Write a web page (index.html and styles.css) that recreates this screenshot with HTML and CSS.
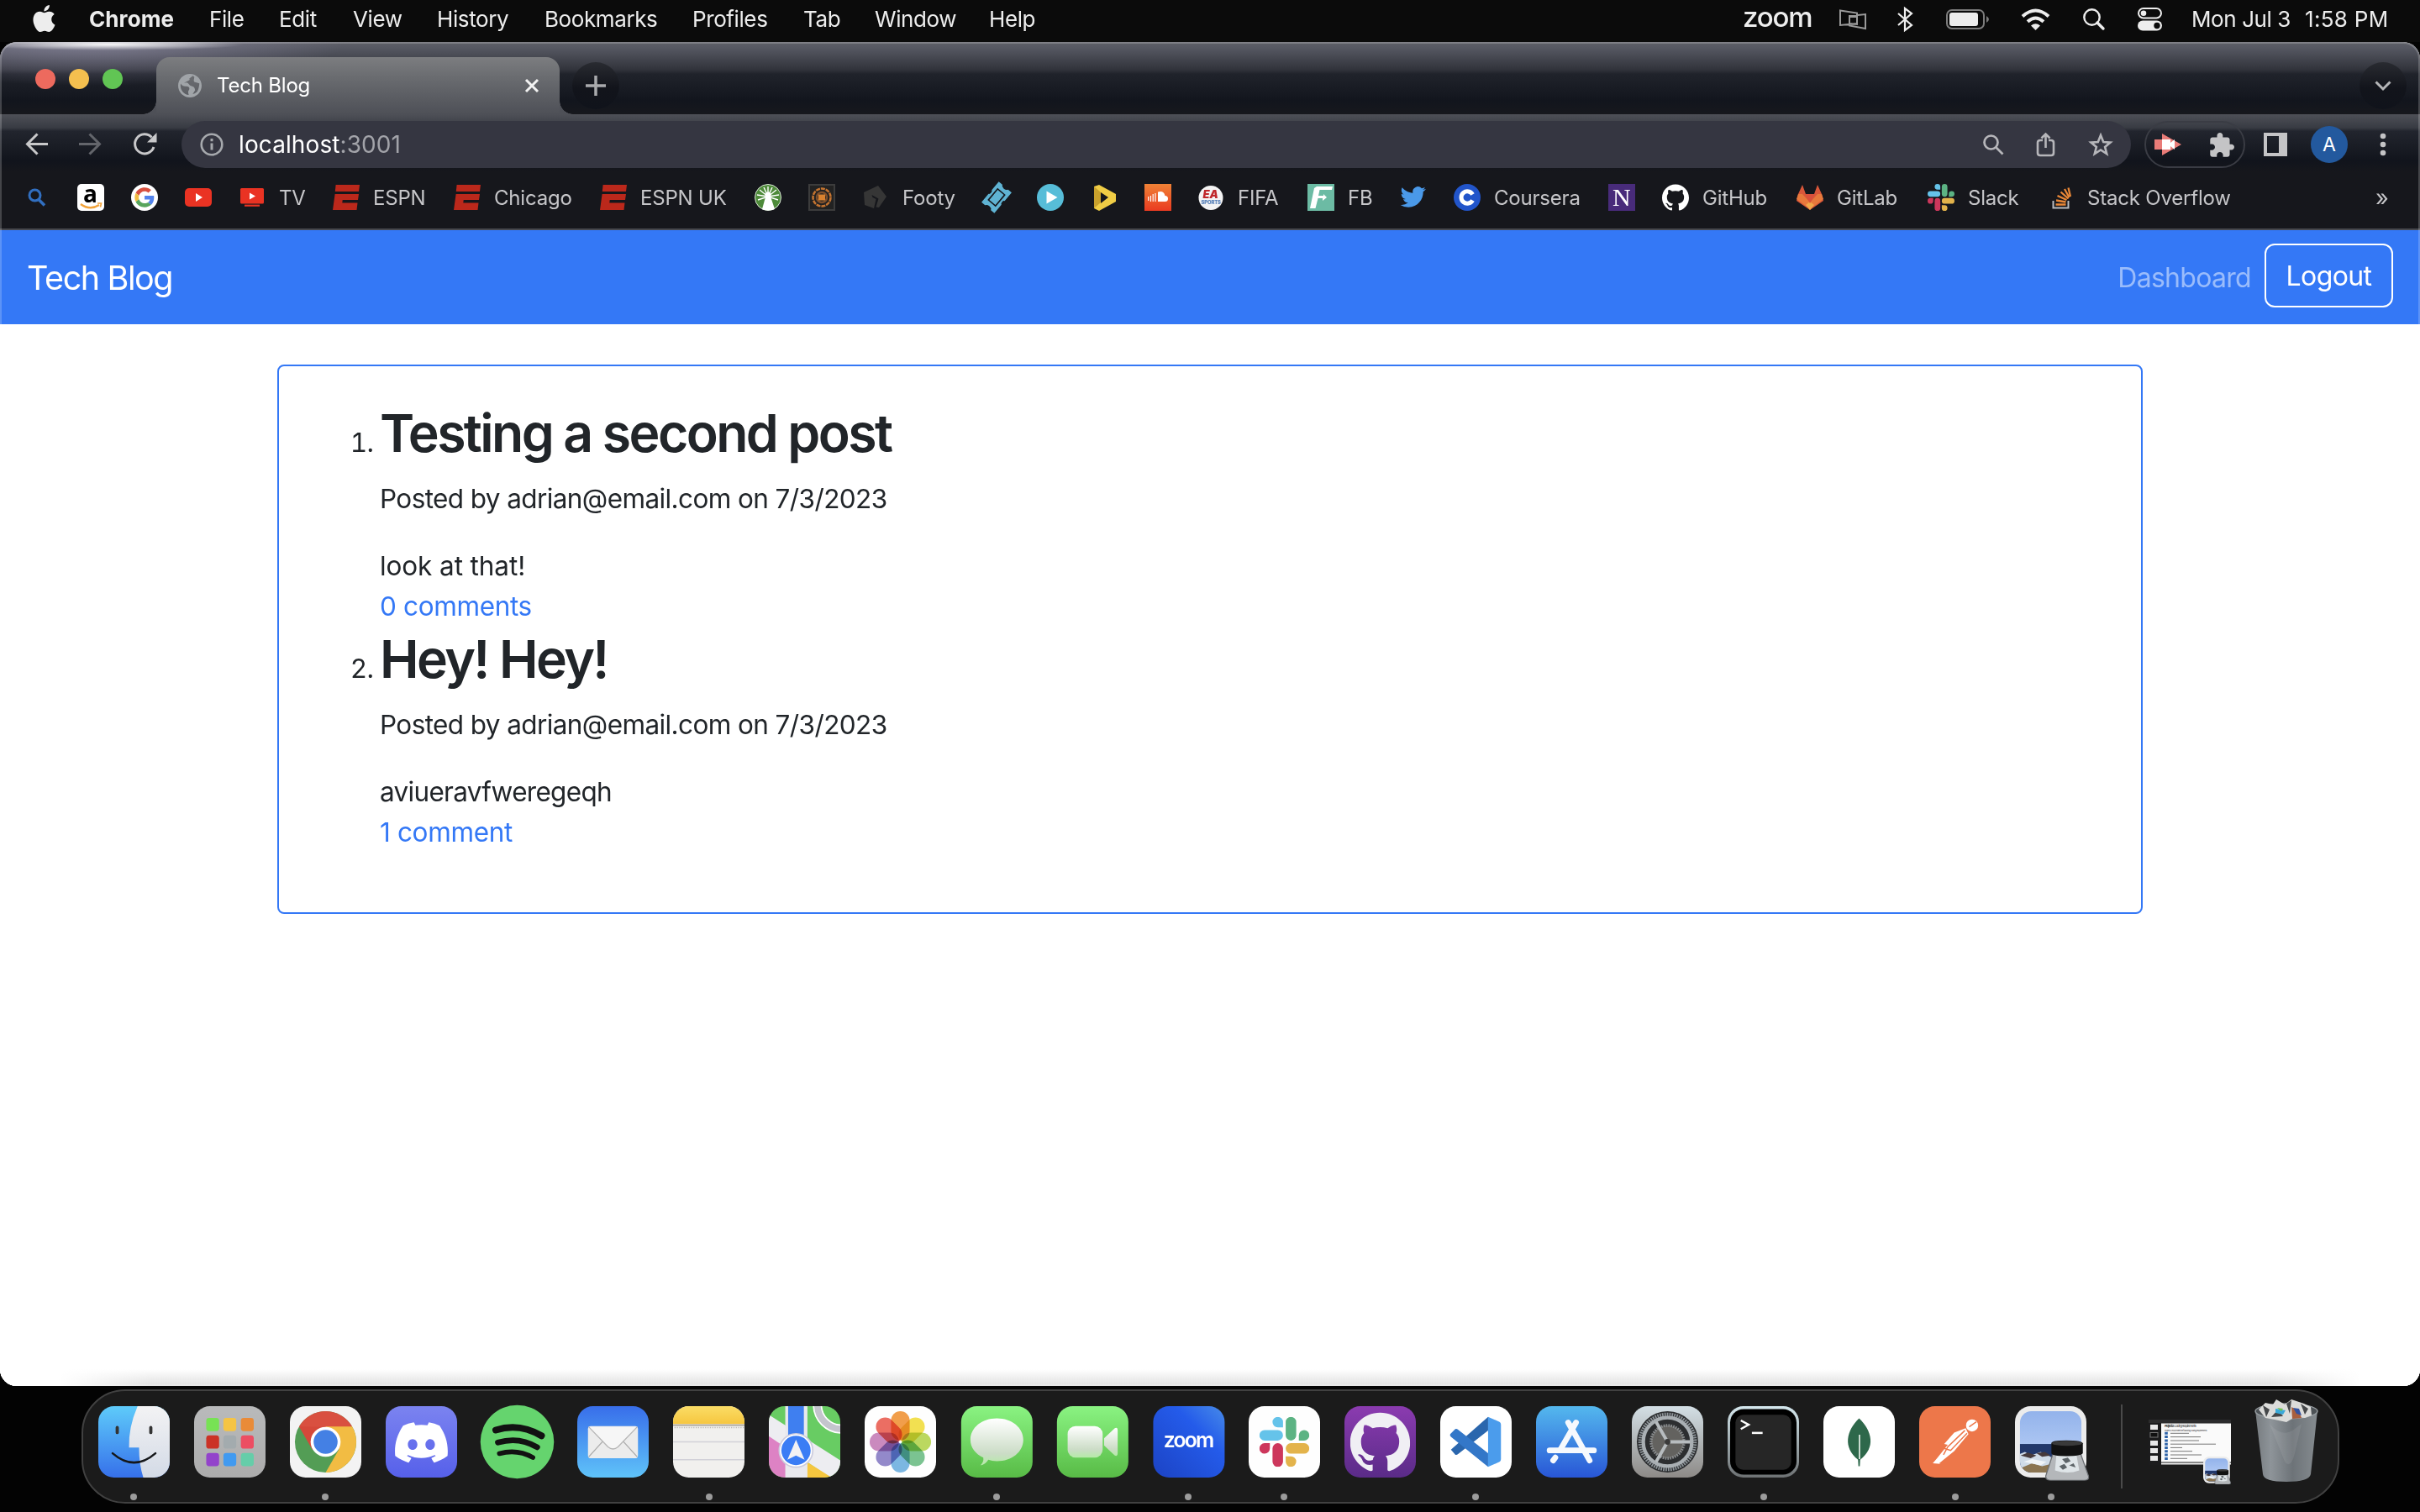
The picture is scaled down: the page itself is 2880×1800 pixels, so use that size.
FILE: index.html
```html
<!DOCTYPE html>
<html lang="en">
<head>
<meta charset="utf-8">
<title>Tech Blog</title>
<link rel="stylesheet" href="styles.css">
</head>
<body>
<svg class="defs" aria-hidden="true">
  <defs>
    <symbol id="espn" viewBox="0 0 32 32"><path d="M3.600 1H32L31 9H2.800zM2.600 12H31L30 19H11.700L11.300 22.500H29.500L28.500 31H0z" fill="#bb281b"/></symbol>
    <symbol id="slack" viewBox="0 0 24 24">
      <path fill="#cd375c" d="M5.042 15.165a2.528 2.528 0 0 1-2.520 2.523A2.528 2.528 0 0 1 0 15.165a2.527 2.527 0 0 1 2.522-2.520h2.520v2.520zM6.313 15.165a2.527 2.527 0 0 1 2.521-2.520 2.527 2.527 0 0 1 2.521 2.520v6.313A2.528 2.528 0 0 1 8.834 24a2.528 2.528 0 0 1-2.521-2.522v-6.313z"/>
      <path fill="#65c3ea" d="M8.834 5.042a2.528 2.528 0 0 1-2.521-2.520A2.528 2.528 0 0 1 8.834 0a2.528 2.528 0 0 1 2.521 2.522v2.520H8.834zM8.834 6.313a2.528 2.528 0 0 1 2.521 2.521 2.528 2.528 0 0 1-2.521 2.521H2.522A2.528 2.528 0 0 1 0 8.834a2.528 2.528 0 0 1 2.522-2.521h6.312z"/>
      <path fill="#5cb383" d="M18.956 8.834a2.528 2.528 0 0 1 2.522-2.521A2.528 2.528 0 0 1 24 8.834a2.528 2.528 0 0 1-2.522 2.521h-2.522V8.834zM17.688 8.834a2.528 2.528 0 0 1-2.523 2.521 2.527 2.527 0 0 1-2.520-2.521V2.522A2.527 2.527 0 0 1 15.165 0a2.528 2.528 0 0 1 2.523 2.522v6.312z"/>
      <path fill="#e3b34b" d="M15.165 18.956a2.528 2.528 0 0 1 2.523 2.522A2.528 2.528 0 0 1 15.165 24a2.527 2.527 0 0 1-2.520-2.522v-2.522h2.520zM15.165 17.688a2.527 2.527 0 0 1-2.520-2.523 2.526 2.526 0 0 1 2.520-2.520h6.313A2.527 2.527 0 0 1 24 15.165a2.528 2.528 0 0 1-2.522 2.523h-6.313z"/>
    </symbol>
    <symbol id="github" viewBox="0 0 24 24"><path d="M12 .297c-6.630 0-12 5.373-12 12 0 5.303 3.438 9.800 8.205 11.385.6.113.82-.258.82-.577 0-.285-.01-1.040-.015-2.040-3.338.724-4.042-1.610-4.042-1.610C4.422 18.070 3.633 17.700 3.633 17.700c-1.087-.744.084-.729.084-.729 1.205.084 1.838 1.236 1.838 1.236 1.070 1.835 2.809 1.305 3.495.998.108-.776.417-1.305.76-1.605-2.665-.3-5.466-1.332-5.466-5.930 0-1.310.465-2.380 1.235-3.220-.135-.303-.54-1.523.105-3.176 0 0 1.005-.322 3.300 1.230.96-.267 1.980-.399 3-.405 1.020.006 2.040.138 3 .405 2.280-1.552 3.285-1.230 3.285-1.230.645 1.653.24 2.873.12 3.176.765.84 1.230 1.910 1.230 3.220 0 4.610-2.805 5.625-5.475 5.920.42.36.81 1.096.81 2.220 0 1.606-.015 2.896-.015 3.286 0 .315.21.69.825.57C20.565 22.092 24 17.592 24 12.297c0-6.627-5.373-12-12-12"/></symbol>
    <symbol id="preview" viewBox="0 0 104 104">
      <rect width="100" height="100" rx="22" fill="#ececec"/>
      <clipPath id="pvc"><rect x="7" y="7" width="86" height="86" rx="16"/></clipPath>
      <g clip-path="url(#pvc)">
        <rect width="100" height="100" fill="url(#sky)"/>
        <rect y="53" width="100" height="50" fill="#22386b"/>
        <path d="M0 70l14-6 8 5 14-5 14 7 8 20H0z" fill="#cfdbe8"/>
        <path d="M8 69l10-4 12 4-8 4zM30 66l12-2 8 5-12 2z" fill="#463a3c"/>
        <path d="M10 86l14-6 14 4 16-4v20H10z" fill="#8b7552"/>
        <path d="M12 78l12-4 20 4-8 5z" fill="#f0f4f8"/>
      </g>
      <path d="M53 67h39l11 31q1 6-6 6H50q-7 0-7-6z" fill="#b4b7ba" stroke="#6b6f73" stroke-width="1.500"/>
      <path d="M58 68h28l4 22q-16 6-34 0z" fill="#dfe5e8"/>
      <path d="M66 74l8-2 4 5-7 3zM62 84l7-3 4 5-6 3zM76 83l6-3 3 6z" fill="#5d6468"/>
      <path d="M51 52q0-4 21-4t23 4v14q-2 4-23 4t-21-4z" fill="#111"/>
      <ellipse cx="73" cy="52" rx="21" ry="3.500" fill="#3a3a3a"/>
    </symbol>
    <linearGradient id="sky" x2="0" y2="1"><stop stop-color="#8fb0ea"/><stop offset=".53" stop-color="#abc5f2"/></linearGradient>
    <linearGradient id="gFace" x2="0" y2="1"><stop stop-color="#5ecbfa"/><stop offset="1" stop-color="#3670ea"/></linearGradient>
    <linearGradient id="gFaceR" x2="0" y2="1"><stop stop-color="#f3f3f4"/><stop offset="1" stop-color="#d3dae6"/></linearGradient>
    <linearGradient id="gGrey" x2="0" y2="1"><stop stop-color="#b9babb"/><stop offset="1" stop-color="#acacac"/></linearGradient>
    <linearGradient id="gDisc" x2="0" y2="1"><stop stop-color="#7b83f0"/><stop offset="1" stop-color="#5660ea"/></linearGradient>
    <linearGradient id="gMail" x2="0" y2="1"><stop stop-color="#386eea"/><stop offset="1" stop-color="#5fc3f9"/></linearGradient>
    <linearGradient id="gGreen" x2="0" y2="1"><stop stop-color="#8af382"/><stop offset="1" stop-color="#58bb46"/></linearGradient>
    <linearGradient id="gBub" x2="0" y2="1"><stop stop-color="#fff"/><stop offset=".75" stop-color="#cbdcc6"/><stop offset="1" stop-color="#b5eba7"/></linearGradient>
    <linearGradient id="gZoom" x1="1" x2="0" y2="1"><stop stop-color="#478be8"/><stop offset=".35" stop-color="#245bea"/><stop offset="1" stop-color="#1c43c4"/></linearGradient>
    <linearGradient id="gPurple" x2="0" y2="1"><stop stop-color="#8b3bb0"/><stop offset="1" stop-color="#5a2b88"/></linearGradient>
    <linearGradient id="gStore" x2="0" y2="1"><stop stop-color="#54b8ee"/><stop offset="1" stop-color="#2856d6"/></linearGradient>
    <linearGradient id="gSet" x2="0" y2="1"><stop stop-color="#d3dfe5"/><stop offset="1" stop-color="#8d8a87"/></linearGradient>
    <linearGradient id="gTerm" x2="0" y2="1"><stop stop-color="#d5e8ee"/><stop offset="1" stop-color="#6d7173"/></linearGradient>
    <linearGradient id="gNote" x2="0" y2="1"><stop stop-color="#fbdd66"/><stop offset="1" stop-color="#f6c63f"/></linearGradient>
    <linearGradient id="gTrash"><stop stop-color="#777c80"/><stop offset=".25" stop-color="#8e9499"/><stop offset=".6" stop-color="#6d7378"/><stop offset="1" stop-color="#868c90"/></linearGradient>
    <linearGradient id="gSc" x2="0" y2="1"><stop stop-color="#f08236"/><stop offset="1" stop-color="#ea3b21"/></linearGradient>
    <clipPath id="app"><rect width="100" height="100" rx="22"/></clipPath>
  </defs>
</svg>

<header class="menubar">
  <nav class="menus">
    <svg class="apple" viewBox="2 0 20 24" width="27" height="32"><path fill="#ededed" d="M12.152 6.896c-.948 0-2.415-1.078-3.960-1.040-2.040.027-3.910 1.183-4.961 3.014-2.117 3.675-.546 9.103 1.519 12.090 1.013 1.454 2.208 3.090 3.792 3.039 1.520-.065 2.090-.987 3.935-.987 1.831 0 2.350.987 3.960.948 1.637-.026 2.676-1.480 3.676-2.948 1.156-1.688 1.636-3.325 1.662-3.415-.039-.013-3.182-1.221-3.220-4.857-.026-3.040 2.480-4.494 2.597-4.559-1.429-2.090-3.623-2.324-4.390-2.376-2-.156-3.675 1.090-4.610 1.090zM15.530 3.830c.843-1.012 1.400-2.427 1.245-3.830-1.207.052-2.662.805-3.532 1.818-.78.896-1.454 2.338-1.273 3.714 1.338.104 2.715-.688 3.559-1.701"/></svg>
    <b>Chrome</b><span>File</span><span>Edit</span><span>View</span><span>History</span><span>Bookmarks</span><span>Profiles</span><span>Tab</span><span>Window</span><span>Help</span>
  </nav>
  <div class="status">
    <span class="zoomtext">zoom</span>
    <svg width="33" height="24" viewBox="0 0 33 24" fill="none" stroke="#9a9a9a" stroke-width="2"><path d="M1 1.500l20 3V17L1 19zM12 9h9v9l-9-1zM12 8l19-2v17l-19-3.500z"/></svg>
    <svg width="20" height="30" viewBox="0 0 20 30" fill="none" stroke="#ededed" stroke-width="2.200"><path d="M1 8l16 14-8 6V2l8 6L1 22"/></svg>
    <svg width="52" height="24" viewBox="0 0 52 24"><rect x="1" y="1" width="44" height="22" rx="6" fill="none" stroke="#7c7c7c" stroke-width="2"/><rect x="4" y="4" width="34" height="16" rx="3" fill="#ededed"/><path d="M48 8q6 4 0 8z" fill="#7c7c7c"/></svg>
    <svg width="35" height="26" viewBox="0 0 35 26" fill="none" stroke="#ededed" stroke-width="4"><path d="M2 9.500q15.500-14 31 0M8 15.800q9.500-8.600 19 0"/><path d="M12 20.500q5.500-4.600 11 0L17.500 26z" fill="#ededed" stroke="none"/></svg>
    <svg width="26" height="26" viewBox="0 0 26 26" fill="none" stroke="#ededed" stroke-width="2.400"><circle cx="10.500" cy="10.500" r="9.200"/><path d="M17 17l7 7" stroke-width="3.400" stroke-linecap="round"/></svg>
    <svg width="29" height="28" viewBox="0 0 29 28"><rect x="1" y="1" width="27" height="11.500" rx="5.750" fill="none" stroke="#ededed" stroke-width="2"/><circle cx="7" cy="6.800" r="3.300" fill="#ededed"/><rect y="15.500" width="29" height="12" rx="6" fill="#ededed"/><circle cx="23" cy="21.500" r="3.700" fill="#0b0b0b"/></svg>
    <span>Mon Jul 3</span><span class="clock">1:58 PM</span>
  </div>
</header>

<main class="window">
  <div class="tabstrip">
    <div class="lights"><i class="red"></i><i class="amber"></i><i class="green"></i></div>
    <div class="tab">
      <svg width="28" height="28" viewBox="2 2 20 20"><path fill="#a0a4a8" d="M12 2C6.480 2 2 6.480 2 12s4.480 10 10 10 10-4.480 10-10S17.520 2 12 2zm-1 17.930c-3.950-.49-7-3.850-7-7.930 0-.62.08-1.210.21-1.790Q6 13 9 12.500q3 0 2.500 2.500l-1 2q0 1 .5 2.930zm6.900-2.540q-2 1.500-3.500 1.800l2-3.190q-.2-3-2.400-3.500T11 10.500 8 9.500 10 8q2.500-.5 1.500-2l3-2.400c2.930 1.190-.5 3.400 1.500 5.400t4 1c0 2.080-.8 5.970-2.100 7.390z"/></svg>
      <span>Tech Blog</span>
      <svg width="18" height="18" viewBox="0 0 18 18" stroke="#f2f2f2" stroke-width="3"><path d="M2 2l14 14M16 2L2 16"/></svg>
    </div>
    <div class="round"><svg width="24" height="24" viewBox="0 0 24 24" stroke="#a9aaad" stroke-width="3.500"><path d="M12 0v24M0 12h24"/></svg></div>
    <div class="round last"><svg width="20" height="12" viewBox="0 0 20 12" fill="none" stroke="#b5b6b8" stroke-width="3"><path d="M1.500 1.500L10 10l8.500-8.500"/></svg></div>
  </div>

  <div class="toolbar">
    <svg width="28" height="28" viewBox="0 0 28 28" fill="none" stroke="#c8c8ca" stroke-width="3"><path d="M27 13.500H3M14.500 1.500l-12 12 12 12"/></svg>
    <svg width="28" height="28" viewBox="0 0 28 28" fill="none" stroke="#63656b" stroke-width="3"><path d="M0 13.500h24M12.500 1.500l12 12-12 12"/></svg>
    <svg width="28" height="28" viewBox="0 0 28 28" fill="none" stroke="#c8c8ca" stroke-width="3"><path d="M24 17A11.500 11.500 0 1 1 21.500 5.500"/><path d="M27.500 0v11.500H16z" fill="#c8c8ca" stroke="none"/></svg>
    <div class="omnibox">
      <svg width="28" height="28" viewBox="0 0 28 28" fill="none" stroke="#a6a9ad" stroke-width="2.600"><circle cx="14" cy="14" r="12.300"/><path d="M14 12.500v8M14 7v3.200" stroke-width="3"/></svg>
      <span class="url">localhost<em>:3001</em></span>
      <svg width="25" height="25" viewBox="0 0 25 25" fill="none" stroke="#b6b6ba" stroke-width="2.700"><circle cx="9.500" cy="9.500" r="8"/><path d="M15.500 15.500l8 8"/></svg>
      <svg width="24" height="30" viewBox="0 0 24 30" fill="none" stroke="#b6b6ba" stroke-width="2.600"><path d="M8 10H5q-3 0-3 3v12q0 3 3 3h13q3 0 3-3V13q0-3-3-3h-3M11.500 19V3M6.500 7.500l5-5 5 5"/></svg>
      <svg width="30" height="30" viewBox="0 0 30 30" fill="none" stroke="#b6b6ba" stroke-width="2.600"><path d="M15 4l3.200 8 8.300.6-6.400 5.300 2.100 8.200-7.200-4.600-7.200 4.600 2.100-8.200L3.500 12.600l8.300-.6z"/></svg>
    </div>
    <div class="extensions">
      <svg width="32" height="28" viewBox="0 0 32 28"><path d="M0 8h9V1l23 13L9 27v-7H0z" fill="#e97c78"/><path d="M9 8h10v4l5-4v12l-5-4v4H9z" fill="#fff"/></svg>
      <svg width="29" height="29" viewBox="1.800 1 21.200 21.200"><path fill="#c4c4c6" d="M20.500 11H19V7c0-1.100-.9-2-2-2h-4V3.500C13 2.120 11.880 1 10.500 1S8 2.120 8 3.500V5H4c-1.100 0-1.990.9-1.990 2v3.800H3.500c1.490 0 2.700 1.210 2.700 2.700s-1.210 2.700-2.700 2.700H2V20c0 1.100.9 2 2 2h3.800v-1.500c0-1.490 1.210-2.700 2.700-2.700 1.490 0 2.700 1.210 2.700 2.700V22H17c1.100 0 2-.9 2-2v-4h1.500c1.380 0 2.500-1.120 2.500-2.500S21.880 11 20.500 11z"/></svg>
    </div>
    <svg width="28" height="28" viewBox="0 0 28 28"><path fill="#c4c4c6" fill-rule="evenodd" d="M0 0h28v28H0zM4 4v20h14V4z"/></svg>
    <span class="avatar">A</span>
    <svg width="8" height="28" viewBox="0 0 8 28" fill="#c4c4c6"><circle cx="4" cy="4" r="3.300"/><circle cx="4" cy="14" r="3.300"/><circle cx="4" cy="24" r="3.300"/></svg>
  </div>

  <div class="bookmarks">
    <a><svg width="32" height="32" viewBox="0 0 32 32" fill="none" stroke="#316fc0" stroke-width="3"><circle cx="13.500" cy="13.500" r="6.500"/><path d="M18 18.500l7 7" stroke-width="3.500"/></svg></a>
    <a><svg width="32" height="32" viewBox="0 0 32 32"><rect width="32" height="32" rx="5" fill="#fff"/><text class="amazon" x="7" y="22">a</text><path d="M4 24q11 8 22 1" fill="none" stroke="#f2a33a" stroke-width="2.400"/><path d="M24 23h4.500l-1 4.500" fill="none" stroke="#f2a33a" stroke-width="1.600"/></svg></a>
    <a><svg width="32" height="32" viewBox="0 0 32 32"><circle cx="16" cy="16" r="16" fill="#fff"/><g transform="translate(4.300 4.200) scale(.49)"><path fill="#d9503f" d="M24 9.500c3.540 0 6.710 1.220 9.210 3.600l6.850-6.850C35.900 2.380 30.470 0 24 0 14.620 0 6.510 5.380 2.560 13.220l7.980 6.190C12.430 13.720 17.740 9.500 24 9.500z"/><path fill="#5383ec" d="M46.980 24.550c0-1.570-.15-3.090-.38-4.550H24v9.020h12.940c-.58 2.960-2.260 5.480-4.780 7.180l7.730 6c4.510-4.180 7.090-10.360 7.090-17.650z"/><path fill="#f2bd42" d="M10.530 28.590c-.48-1.450-.76-2.990-.76-4.590s.27-3.140.76-4.590l-7.980-6.190C.92 16.460 0 20.120 0 24c0 3.880.92 7.540 2.560 10.780l7.970-6.190z"/><path fill="#58a55c" d="M24 48c6.480 0 11.930-2.130 15.890-5.810l-7.730-6c-2.150 1.450-4.920 2.300-8.160 2.300-6.260 0-11.570-4.220-13.470-9.910l-7.980 6.190C6.510 42.620 14.620 48 24 48z"/></g></svg></a>
    <a><svg width="32" height="32" viewBox="0 0 32 32"><rect y="5" width="32" height="22" rx="5" fill="#ea3323"/><path d="M13 11l8 5-8 5z" fill="#fff"/></svg></a>
    <a><svg width="32" height="32" viewBox="0 0 32 32"><rect x="2" y="5" width="28" height="18.500" rx="1.500" fill="#ea3323"/><rect x="7" y="24.600" width="18" height="2.200" fill="#ea3323"/><path d="M13 10.500l7 4-7 4z" fill="#fff"/></svg>TV</a>
    <a><svg width="32" height="32"><use href="#espn"/></svg>ESPN</a>
    <a><svg width="32" height="32"><use href="#espn"/></svg>Chicago</a>
    <a><svg width="32" height="32"><use href="#espn"/></svg>ESPN UK</a>
    <a><svg width="32" height="32" viewBox="0 0 32 32"><circle cx="16" cy="16" r="15.500" fill="#4e8a3a" stroke="#dce8d8"/><g stroke="#fff" stroke-width="1.400"><path d="M16 15L16 3M16 15L11 4M16 15L21 4M16 15L6 7M16 15L26 7M16 15L3 13M16 15L29 13M16 15L4 19M16 15L28 19"/></g><path d="M14 12h4l6 18q-8 3-15 0z" fill="#fff"/><circle cx="16" cy="13" r="3.500" fill="#fff"/></svg></a>
    <a><svg width="32" height="32" viewBox="0 0 32 32"><rect x="1" y="1" width="30" height="30" fill="#222" stroke="#3c3c3c" stroke-width="2"/><circle cx="16" cy="16" r="10.500" fill="none" stroke="#c57430" stroke-width="2.500" stroke-dasharray="5 1"/><circle cx="16" cy="16" r="6" fill="none" stroke="#7d4f2c" stroke-width="2.500"/><rect x="12" y="12.500" width="8" height="7" fill="#d9822f"/></svg></a>
    <a><svg width="32" height="32" viewBox="0 0 32 32"><path d="M2 10L19 2l10 13-9 13-3.500-.5 3-10-8-4.500 1 3 4 2-2.500 11L3 25z" fill="#363636"/></svg>Footy</a>
    <a><svg width="32" height="32" viewBox="0 0 32 32"><g transform="rotate(40 16 16)"><path d="M6 0h5.500q1 2.500 4.500 2.500t4.500-2.500H26v13q-1.500.5-1.500 3t1.500 3v13h-5.500q-1-2.500-4.500-2.500t-4.500 2.500H6V19q1.500-.5 1.500-3T6 13z" fill="#5fb3d3"/><rect x="10.500" y="7.500" width="11" height="17" fill="none" stroke="#16171c" stroke-width="1.600"/></g></svg></a>
    <a><svg width="32" height="32" viewBox="0 0 32 32"><circle cx="16" cy="16" r="16" fill="#57bdd8"/><path d="M11.500 8.500L24.500 16l-13 7.500z" fill="#fff"/></svg></a>
    <a><svg width="32" height="32" viewBox="0 0 32 32"><path d="M10 1l20 11v9L10 32l-6-3V3z" fill="#f0cd45"/><path d="M4 3v26l8-7V10z" fill="#c9a12c"/><path d="M12 10l9 6-9 7z" fill="#16171c"/></svg></a>
    <a><svg width="32" height="32" viewBox="0 0 32 32"><rect width="32" height="32" fill="url(#gSc)"/><path d="M16 9.500q7-2 8.500 4.500 3.500 0 3.500 3.500T24.500 21H16z" fill="#fff"/><path d="M4.700 15v5M7.500 14v7M10.200 12v9M13 11v10" stroke="#fff" stroke-width="1.200"/></svg></a>
    <a><svg width="32" height="32" viewBox="0 0 32 32"><circle cx="16" cy="16.500" r="14.500" fill="#f4f4f4"/><text class="ea" x="6.500" y="17">EA</text><text class="sports" x="4.500" y="23.500">SPORTS</text></svg>FIFA</a>
    <a><svg width="32" height="32" viewBox="0 0 32 32"><rect width="32" height="32" fill="#6cbba4"/><path d="M11 3h19l-1 4H14.500l-1.500 7h6v-2l4 4-5 4v-3h-5.500L9.500 29H3L8 5z" fill="#fff"/></svg>FB</a>
    <a><svg width="32" height="32" viewBox="-.5 -.3 25.500 25.500"><path fill="#4a99e9" d="M23.953 4.570a10 10 0 01-2.825.775 4.958 4.958 0 002.163-2.723c-.951.555-2.005.959-3.127 1.184a4.920 4.920 0 00-8.384 4.482C7.690 8.095 4.067 6.130 1.640 3.162a4.822 4.822 0 00-.666 2.475c0 1.710.87 3.213 2.188 4.096a4.904 4.904 0 01-2.228-.616v.06a4.923 4.923 0 003.946 4.827 4.996 4.996 0 01-2.212.085 4.936 4.936 0 004.604 3.417 9.867 9.867 0 01-6.102 2.105c-.39 0-.779-.023-1.170-.067a13.995 13.995 0 007.557 2.209c9.053 0 13.998-7.496 13.998-13.985 0-.21 0-.42-.015-.63A9.935 9.935 0 0024 4.590z"/></svg></a>
    <a><svg width="32" height="32" viewBox="0 0 32 32"><circle cx="16" cy="16" r="16" fill="#2255ca"/><path d="M22.500 12.500A7.200 7.200 0 1 0 22.500 19.500" fill="none" stroke="#fff" stroke-width="5"/></svg>Coursera</a>
    <a><svg width="32" height="32" viewBox="0 0 32 32"><rect width="32" height="32" fill="#482b7a"/><text class="serif-n" x="5" y="26">N</text></svg></a>
    <a><svg width="32" height="32" fill="#fff"><use href="#github"/></svg>GitHub</a>
    <a><svg width="32" height="32" viewBox="0 0 32 32"><path d="M7 1l4 11h10l4-11 5 11 2 8-16 11L0 20l2-8z" fill="#d9573a"/><path d="M0 18l2-6h5l9 10 9-10h5l2 6-16 12z" fill="#e8793c"/><path d="M16 21l5 4-5 6-5-6z" fill="#f0a849"/><path d="M10 12h12l-6 11z" fill="#d9503b"/></svg>GitLab</a>
    <a><svg width="32" height="32"><use href="#slack"/></svg>Slack</a>
    <a><svg width="32" height="32" viewBox="0 0 32 32" fill="none"><path d="M5.500 20v8.500h18V20" stroke="#b9bcc0" stroke-width="2"/><path d="M8.500 24.500h12" stroke="#e98737" stroke-width="2.400"/><path d="M9 19.500l11.500 2M10.500 14l11 5M14.500 9.500l9 8M19 6l5.500 10M23.500 4.500L26 15" stroke="#e98737" stroke-width="2.300"/></svg><span>Stack Overflow</span></a>
    <a class="more">»</a>
  </div>

  <section class="page">
    <nav class="navbar">
      <a class="brand">Tech Blog</a>
      <a class="dash">Dashboard</a>
      <a class="logout">Logout</a>
    </nav>
    <article class="card">
      <ol>
        <li><h2>Testing a second post</h2><p>Posted by adrian@email.com on 7/3/2023</p><div class="short">look at that!</div><a>0 comments</a></li>
        <li><h2>Hey! Hey!</h2><p>Posted by adrian@email.com on 7/3/2023</p><div>aviueravfweregeqh</div><a>1 comment</a></li>
      </ol>
    </article>
  </section>
</main>

<footer class="dock">
  <div class="app on"><svg viewBox="0 0 100 100"><g clip-path="url(#app)"><rect width="100" height="100" fill="url(#gFace)"/><path d="M55 0Q42 30 43 58H57Q57 82 63 100H100V0z" fill="url(#gFaceR)"/></g><path d="M26.500 30v7M73.500 30v7" stroke="#333" stroke-width="4.500" stroke-linecap="round"/><path d="M20 66q30 26 60 0" fill="none" stroke="#15171a" stroke-width="3" stroke-linecap="round"/></svg></div>
  <div class="app"><svg viewBox="0 0 100 100"><rect width="100" height="100" rx="22" fill="url(#gGrey)"/><rect x="17" y="16.500" width="18" height="18.500" rx="4" fill="#77e254"/><rect x="41" y="16.500" width="18" height="18.500" rx="4" fill="#f5c444"/><rect x="65.500" y="16.500" width="18" height="18.500" rx="4" fill="#e98b38"/><rect x="17" y="41" width="18" height="18.500" rx="4" fill="#cb3226"/><rect x="41" y="41" width="18" height="18.500" rx="4" fill="#a3abae"/><rect x="65.500" y="41" width="18" height="18.500" rx="4" fill="#ec4e63"/><rect x="17" y="65.500" width="18" height="18.500" rx="4" fill="#9343cb"/><rect x="41" y="65.500" width="18" height="18.500" rx="4" fill="#419af0"/><rect x="65.500" y="65.500" width="18" height="18.500" rx="4" fill="#65cda9"/></svg></div>
  <div class="app on"><svg viewBox="0 0 100 100"><rect width="100" height="100" rx="22" fill="#f3f3f3"/><circle cx="50" cy="50" r="43" fill="#539d55"/><path d="M50 50L12.800 28.500A43 43 0 0 1 87.200 28.500z" fill="#d95040"/><path d="M50 28.500H87.200A43 43 0 0 1 50 93L68.600 60.500z" fill="#f2bc43"/><path d="M12.800 28.500L31.400 61 50 50V29z" fill="#d5493a"/><circle cx="50" cy="50" r="21" fill="#fff"/><circle cx="50" cy="50" r="16.800" fill="#4480e4"/></svg></div>
  <div class="app"><svg viewBox="0 0 100 100"><rect width="100" height="100" rx="22" fill="url(#gDisc)"/><path transform="translate(13 14) scale(3.080)" fill="#fff" d="M20.317 4.370a19.791 19.791 0 00-4.885-1.515.074.074 0 00-.079.037c-.211.375-.445.865-.608 1.250-1.845-.276-3.680-.276-5.487 0-.164-.393-.406-.874-.618-1.250a.077.077 0 00-.079-.037 19.736 19.736 0 00-4.885 1.515.07.07 0 00-.032.028C.533 9.046-.319 13.580.099 18.058a.082.082 0 00.031.056c2.053 1.508 4.041 2.423 5.993 3.029a.078.078 0 00.084-.028c.462-.63.873-1.295 1.226-1.994a.076.076 0 00-.042-.106c-.653-.248-1.274-.55-1.872-.892a.077.077 0 01-.008-.128c.126-.094.252-.192.372-.291a.074.074 0 01.078-.011c3.928 1.793 8.180 1.793 12.061 0a.074.074 0 01.079.01c.12.099.246.198.373.292a.077.077 0 01-.007.128 12.299 12.299 0 01-1.873.891.077.077 0 00-.041.107c.36.698.772 1.363 1.225 1.993a.076.076 0 00.084.029c1.961-.607 3.950-1.522 6.002-3.029a.077.077 0 00.031-.055c.5-5.177-.838-9.674-3.549-13.660a.061.061 0 00-.031-.029zM8.020 15.331c-1.183 0-2.157-1.086-2.157-2.419s.956-2.419 2.157-2.419c1.211 0 2.176 1.095 2.157 2.419 0 1.333-.956 2.419-2.157 2.419zm7.975 0c-1.183 0-2.157-1.086-2.157-2.419s.955-2.419 2.157-2.419c1.211 0 2.176 1.095 2.157 2.419 0 1.333-.946 2.419-2.157 2.419z"/></svg></div>
  <div class="app"><svg viewBox="0 0 100 100"><circle cx="50" cy="50" r="51.500" fill="#65d46e"/><g fill="none" stroke="#121212" stroke-linecap="round"><path d="M20 33.500Q53 23 84 41.500" stroke-width="9.500"/><path d="M23 51Q52 42 78 57.500" stroke-width="8"/><path d="M25 66.500Q50 59.500 72 72" stroke-width="6.500"/></g></svg></div>
  <div class="app"><svg viewBox="0 0 100 100"><rect width="100" height="100" rx="22" fill="url(#gMail)"/><rect x="15" y="28" width="70" height="45" rx="4" fill="#ececec"/><path d="M16 71l20-22M84 71L64 49" stroke="#aaa" stroke-width="1.500"/><path d="M16 29l27 28q7 6 14 0l27-28" fill="#f6f6f6" stroke="#b5b5b5" stroke-width="1.500"/></svg></div>
  <div class="app on"><svg viewBox="0 0 100 100"><g clip-path="url(#app)"><rect width="100" height="100" fill="#f1f0ee"/><rect width="100" height="25" fill="url(#gNote)"/><path d="M0 26.500h100" stroke="#a9a59c" stroke-width="2"/><path d="M2 30h98" stroke="#bdbab4" stroke-width="2" stroke-dasharray="1.500 1.800"/><path d="M0 50h100M0 75h100" stroke="#d2d1d8" stroke-width="2"/></g></svg></div>
  <div class="app"><svg viewBox="0 0 100 100"><g clip-path="url(#app)"><rect width="100" height="100" fill="#68cc63"/><path d="M0 38L40 70V100H0z" fill="#dd82c4"/><path d="M0 12L100 76V100H86L0 42z" fill="#ededf1"/><path d="M53 78L88 100H53z" fill="#f5c63f"/><rect x="23" width="31" height="100" fill="#e9e9ee"/><rect x="27" width="22" height="55" fill="#3f7ff0"/><circle cx="102" cy="-2" r="34" fill="none" stroke="#fff" stroke-width="13"/><circle cx="102" cy="-2" r="34" fill="none" stroke="#c4c5cd" stroke-width="9"/></g><circle cx="38" cy="62" r="23.500" fill="#fff" stroke="#ccd" stroke-width="2"/><circle cx="38" cy="62" r="20.500" fill="#3a7df5"/><path d="M38 47l12 28-12-6-12 6z" fill="#f2f2f4"/></svg></div>
  <div class="app"><svg viewBox="0 0 100 100"><rect width="100" height="100" rx="22" fill="#fefefe"/><g class="petals"><rect x="37" y="7" width="26" height="41" rx="13" fill="#f0963c"/><rect x="37" y="7" width="26" height="41" rx="13" fill="#f2de43" transform="rotate(45 50 50)"/><rect x="37" y="7" width="26" height="41" rx="13" fill="#b6d553" transform="rotate(90 50 50)"/><rect x="37" y="7" width="26" height="41" rx="13" fill="#70bf88" transform="rotate(135 50 50)"/><rect x="37" y="7" width="26" height="41" rx="13" fill="#72b1e0" transform="rotate(180 50 50)"/><rect x="37" y="7" width="26" height="41" rx="13" fill="#8a80c6" transform="rotate(225 50 50)"/><rect x="37" y="7" width="26" height="41" rx="13" fill="#c681b9" transform="rotate(270 50 50)"/><rect x="37" y="7" width="26" height="41" rx="13" fill="#ea6256" transform="rotate(315 50 50)"/></g></svg></div>
  <div class="app on"><svg viewBox="0 0 100 100"><rect x="1" width="100" height="100" rx="22" fill="url(#gGreen)"/><path d="M51 17c21 0 37 13 37 30S72 77 51 77q-7 0-12-2-4 7-11 8 5-5 4-11C21 67 14 58 14 47c0-17 16-30 37-30z" fill="url(#gBub)"/></svg></div>
  <div class="app"><svg viewBox="0 0 100 100"><rect x="1" width="100" height="100" rx="22" fill="url(#gGreen)"/><rect x="16" y="28" width="49" height="44" rx="11" fill="url(#gBub)"/><path d="M67 45l15-14q4-2 4 3v32q0 5-4 3L67 55z" fill="url(#gBub)"/></svg></div>
  <div class="app on"><svg viewBox="0 0 100 100"><rect x=".5" width="100" height="100" rx="22" fill="url(#gZoom)"/><text class="zoomapp" x="50.500" y="58" text-anchor="middle" textLength="71">zoom</text></svg></div>
  <div class="app on"><svg viewBox="0 0 100 100"><rect width="100" height="100" rx="22" fill="#fefefe"/><use href="#slack" x="15" y="15" width="70" height="70"/></svg></div>
  <div class="app"><svg viewBox="0 0 100 100"><rect width="100" height="100" rx="22" fill="url(#gPurple)"/><use href="#github" x="8" y="8" width="84" height="84" fill="#f0eff4"/></svg></div>
  <div class="app on"><svg viewBox="0 0 100 100"><rect width="100" height="100" rx="22" fill="#fff"/><path d="M15 61l6 7q2 1 4-1L67 34V15z" fill="#2a66ad"/><path d="M14 39l7-7q2-1 4 1l42 33v19L15 43q-2-2-1-4z" fill="#3377c8"/><path d="M67 15l16 7q2 1 2 4v48q0 3-2 4l-16 7z" fill="#4b9cec"/></svg></div>
  <div class="app"><svg viewBox="0 0 100 100"><rect width="100" height="100" rx="22" fill="url(#gStore)"/><g stroke="#f6f9fd" stroke-width="8" stroke-linecap="round"><path d="M45 23l4 7"/><path d="M19 62h62"/><path d="M56 23L34 61"/><path d="M51 33l24 43"/><path d="M27 72l-3 4"/></g></svg></div>
  <div class="app"><svg viewBox="0 0 100 100"><rect width="100" height="100" rx="22" fill="url(#gSet)"/><circle cx="50" cy="50" r="43" fill="#2c2e30"/><circle cx="50" cy="50" r="38.500" fill="none" stroke="#8e959a" stroke-width="5" stroke-dasharray="2 1.400"/><circle cx="50" cy="50" r="34" fill="none" stroke="#a9afb3" stroke-width="5"/><circle cx="50" cy="50" r="23" fill="#63625f" stroke="#8a8d8f" stroke-width="4" stroke-dasharray="2 1.400"/><path d="M50 50H82M50 50L34 22M50 50L34 78" stroke="#b7bcbf" stroke-width="4.500"/><circle cx="50" cy="50" r="4" fill="#3a3a3a"/></svg></div>
  <div class="app on"><svg viewBox="0 0 100 100"><rect width="100" height="100" rx="22" fill="url(#gTerm)"/><rect x="3.500" y="4" width="93" height="92" rx="19" fill="#000"/><rect x="11" y="12" width="78" height="77" rx="11" fill="#262626"/><path d="M18.500 20l11 6-11 6" fill="none" stroke="#fff" stroke-width="2.800"/><path d="M34 37.500h15" stroke="#fff" stroke-width="3"/></svg></div>
  <div class="app"><svg viewBox="0 0 100 100"><rect width="100" height="100" rx="22" fill="#fff"/><path d="M50 17C68 34 74 58 51.500 75L51 84h-2l-.5-9C27 58 32 34 50 17z" fill="#2e684b"/><path d="M50.500 40v34" stroke="#e5efe8" stroke-width="2"/></svg></div>
  <div class="app on"><svg viewBox="0 0 100 100"><rect width="100" height="100" rx="22" fill="#ed774a"/><circle cx="74" cy="27" r="8.500" fill="#fff"/><path d="M65 31l4 8-20 24-21 17 2 1-11-1 6-7 15-19-5-1 14-16z" fill="#fff"/><path d="M64 34L40 57l-6 11M67 38L44 62l-9-3M70 29l10-7" stroke="#ed774a" stroke-width="1.800" fill="none"/></svg></div>
  <div class="app on"><svg viewBox="0 0 100 100"><use href="#preview" width="104" height="104"/></svg></div>
  <i class="sep"></i>
  <svg class="thumb" width="100" height="76" viewBox="0 0 100 76"><rect width="98" height="54" fill="#1c1c1d"/><rect width="98" height="4" fill="#2c2c2d"/><rect x="15" y="4.500" width="83" height="46" fill="#fafafa"/><rect x="15" y="51.500" width="83" height="2" fill="#eee"/><g fill="#e8e8e8"><rect x="2" y="6" width="9" height="6"/><rect x="2" y="25" width="9" height="6"/><rect x="2" y="34" width="9" height="6"/><rect x="2" y="43" width="9" height="6"/></g><rect x="2" y="15.500" width="9" height="5.500" fill="#111" stroke="#777"/><text class="mini" x="19" y="9.300" textLength="38"><tspan class="strong">Project 2:</tspan> Coding Requirements</text><text class="micro" x="19" y="13.700" textLength="51">Project 2 must meet the following coding requirements:</text><path d="M21 14.800v34" stroke="#2c62a8" stroke-width="3.600" stroke-dasharray="3 1.300"/><path d="M26 16.300h22M26 20.600h36M26 25h34M26 29.200h54M26 33.400h14M26 37.700h26M26 42h37M26 46.300h20" stroke="#777" stroke-width="1"/><use href="#preview" x="65" y="44" width="33" height="33"/></svg>
  <svg class="trash" width="76" height="100" viewBox="0 0 76 100"><path d="M1 14h74l-8 76q-2 9-29 9T10 90z" fill="url(#gTrash)"/><ellipse cx="38" cy="15" rx="37" ry="9" fill="#4d5256" stroke="#969ca0" stroke-width="1.500"/><path d="M5 13l8-8 9 2 4-6 10 6 8-6 9 3 6 2 8 4 1 10-8 3-12-1-10 6-14-3-11-2z" fill="#dcdcda"/><path d="M10 8l8 5-4 9zM38 6l6-4-2 16zM55 6l9 6-4 7zM20 22l8-9 6 8z" fill="#46484a"/><path d="M25 12l12 2-3 5-9-2z" fill="#3ba9d8"/><path d="M27 11l7 1-2 3z" fill="#74c14a"/><path d="M44 10l9 5 3 8-11 1z" fill="#a85f3e"/><path d="M46 11l7 1 3 8-6-2z" fill="#3353a0"/><path d="M18 30q15 18 30 6l8-6-8 35q-5 20-12 10z" fill="#fff" opacity=".08"/></svg>
</footer>
</body>
</html>
```
FILE: styles.css
```css
* { box-sizing: border-box; }
body {
  margin: 0;
  width: 2880px;
  height: 1800px;
  overflow: hidden;
  background: #030303;
  font-family: Inter, "Liberation Sans", sans-serif;
  display: flex;
  flex-direction: column;
}
svg { display: block; flex: none; overflow: visible; }
.defs { position: absolute; width: 0; height: 0; }

/* macOS menu bar */
.menubar {
  flex: none;
  height: 50px;
  padding-bottom: 5px;
  background: #0b0b0b;
  color: #ededed;
  font-size: 26px;
  letter-spacing: -0.4px;
  white-space: pre;
  display: flex;
  justify-content: space-between;
}
.menus, .status { display: grid; align-items: center; }
.menus {
  padding-left: 39px;
  grid-template-columns: 67px 143px 83px 88px 100px 128px 176px 132px 85px 136px 60px;
}
.menus b { font-weight: 700; letter-spacing: 0.1px; }
.apple { margin-top: -1px; }
.status { grid-template-columns: 113px 69px 58px 89px 74px 65px 64px 135px 137px; }
.clock { letter-spacing: .3px; }
.zoomtext { font-size: 33px; font-weight: 500; letter-spacing: -1.2px; line-height: 40px; margin: -5px 0 0 -2px; }

/* browser window */
.window {
  flex: none;
  height: 1600px;
  border-radius: 20px;
  overflow: hidden;
  background: #fff;
  position: relative;
}
.window::after {
  content: "";
  position: absolute;
  inset: 0;
  border-radius: 20px;
  border: 2px solid rgba(255, 255, 255, .2);
  pointer-events: none;
}
.tabstrip {
  height: 86px;
  display: flex;
  background:
    radial-gradient(ellipse 160px 7px at 130px 3px, rgba(255, 255, 255, .95), transparent),
    radial-gradient(ellipse 300px 52px at 110px 0, rgba(165, 160, 190, .5), transparent),
    linear-gradient(#5f6068 0, #575963 6px, #31333b 33px, #20232b 38px, #12151d 70px, #17181d 86px);
}
.lights { width: 186px; padding: 32px 0 0 42px; display: flex; gap: 16px; }
.lights i { width: 24px; height: 24px; border-radius: 50%; }
.red { background: #ed6a5e; }
.amber { background: #f4bf4f; }
.green { background: #61c554; }
.tab {
  position: relative;
  width: 480px;
  margin-top: 18px;
  padding: 0 24px 1px 26px;
  border-radius: 16px 16px 0 0;
  background: linear-gradient(#7c7d80, #6a6c70 35%, #4e5057);
  color: #fff;
  font-size: 24px;
  letter-spacing: -.2px;
  display: flex;
  align-items: center;
  gap: 18px;
}
.tab::before, .tab::after {
  content: "";
  position: absolute;
  bottom: 0;
  width: 16px;
  height: 16px;
}
.tab::before { left: -16px; background: radial-gradient(circle at 0 0, transparent 15.5px, #4e5057 16px); }
.tab::after { right: -16px; background: radial-gradient(circle at 100% 0, transparent 15.5px, #4e5057 16px); }
.tab span { flex: 1; }
.round {
  width: 56px;
  height: 56px;
  margin: 24px 0 0 15px;
  border-radius: 50%;
  background: linear-gradient(#292b31, #12141b 55%, #10131b);
  display: grid;
  place-items: center;
}
.round.last { margin-left: auto; margin-right: 16px; }

.toolbar {
  height: 68px;
  padding: 8px 40px 4px 30px;
  background: linear-gradient(#4e5057 0, #383b43 16px, #22252e 20px, #11141c 56px, #16171c 68px);
  display: grid;
  grid-template-columns: 64px 65px 57px 2320px 16px 120px 22px 56px 82px 8px;
  align-items: center;
}
.toolbar > .omnibox { grid-column: 4; }
.toolbar > .extensions { grid-column: 6; }
.toolbar > .extensions + svg { grid-column: 8; }
.omnibox {
  height: 56px;
  border-radius: 28px;
  background: #353641;
  padding: 0 21px 0 22px;
  display: flex;
  align-items: center;
}
.url { flex: 1; margin-left: 18px; font-size: 28px; color: #fff; letter-spacing: 0.1px; }
.url em { font-style: normal; color: #a2a3a9; }
.omnibox .url ~ svg + svg { margin-left: 38px; }
.extensions {
  height: 56px;
  border: 2px solid #3a3c44;
  border-radius: 28px;
  padding: 0 11px 0 10px;
  display: flex;
  align-items: center;
  justify-content: space-between;
}
.avatar {
  width: 44px;
  height: 44px;
  border-radius: 50%;
  background: #23599e;
  color: #fff;
  font-size: 23px;
  line-height: 45px;
  text-align: center;
}

.bookmarks {
  height: 70px;
  padding: 0 0 6px 28px;
  background: #16171c;
  border-bottom: 2px solid #47484d;
  color: #c6c6c9;
  font-size: 24px;
  letter-spacing: -0.2px;
  white-space: nowrap;
  display: grid;
  align-items: center;
  grid-template-columns: 64px 64px 64px 64px 112px 144px 174px 184px 64px 64px 144px 64px 64px 64px 63px 131px 110px 64px 184px 64px 160px 156px 144px 389px 40px;
}
.bookmarks a { display: flex; align-items: center; gap: 16px; }
.bookmarks a:nth-child(24) { gap: 14px; }
.amazon { font: 700 28px "Open Sans", sans-serif; fill: #000; }
.ea { font: italic 900 13px Inter, sans-serif; fill: #c0282b; }
.sports { font: 800 6px Inter, sans-serif; fill: #4c78b4; }
.serif-n { font: 30px "Liberation Serif", serif; fill: #fff; }
.more { font-size: 27px; }

.page {
  height: 1376px;
  background:
    linear-gradient(90deg, #fff 70px, transparent 180px, transparent 2700px, #fff 2810px),
    #fff linear-gradient(#fff, #e0e0e0) bottom / 100% 20px no-repeat;
  color: #212529;
}
.navbar {
  height: 112px;
  padding: 0 32px 0 32px;
  background: #3478f6;
  color: #fff;
  font-size: 32px;
  display: flex;
  align-items: center;
}
.brand { flex: 1; font-size: 39.5px; letter-spacing: -1.4px; margin-top: 1px; }
.dash { color: #9abcfb; margin-right: 16px; letter-spacing: -.7px; margin-top: 1px; }
.logout {
  width: 153px;
  height: 76px;
  margin-top: -4px;
  border: 2px solid #fff;
  border-radius: 12px;
  line-height: 74px;
  text-align: center;
  letter-spacing: -.6px;
}
.card {
  width: 2220px;
  height: 654px;
  margin: 48px auto 0;
  padding: 41px 40px;
  border: 2px solid #3478f6;
  border-radius: 8px;
}
ol {
  margin: 0;
  padding-left: 80px;
  font-size: 31.5px;
  line-height: 48px;
  letter-spacing: -.7px;
}
h2 { margin: 0 0 16px; font-size: 62.5px; line-height: 76.8px; font-weight: 600; letter-spacing: -2.6px; }
p { margin: 0 0 32px; letter-spacing: -.6px; }
.short { letter-spacing: -.1px; }
li a { color: #3478f6; display: block; letter-spacing: -.35px; }

/* dock */
.dock {
  flex: none;
  width: 2687px;
  height: 136px;
  margin: 4px 0 0 97px;
  padding-left: 3px;
  border: 2px solid #414141;
  border-radius: 52px;
  background: #1b1b1b;
  display: flex;
}
.app {
  width: 114.1px;
  padding-top: 18px;
  display: flex;
  flex-direction: column;
  align-items: center;
}
.app svg { width: 85px; height: 85px; }
.on::after {
  content: "";
  width: 8px;
  height: 8px;
  margin-top: 19px;
  border-radius: 50%;
  background: #9c9c9c;
}
.petals { opacity: .92; }
.petals rect { mix-blend-mode: multiply; }
.zoomapp { font: 600 29px Inter, sans-serif; fill: #fff; }
.sep { width: 2px; height: 100px; margin: 16px 0 0 26px; background: #4a4a4a; }
.thumb { margin: 34px 0 0 31px; }
.trash { margin: 9px 0 0 26px; }
.mini { font: 4px Inter, sans-serif; fill: #444; }
.strong { font-weight: 700; }
.micro { font: 2.500px Inter, sans-serif; fill: #444; }
```
